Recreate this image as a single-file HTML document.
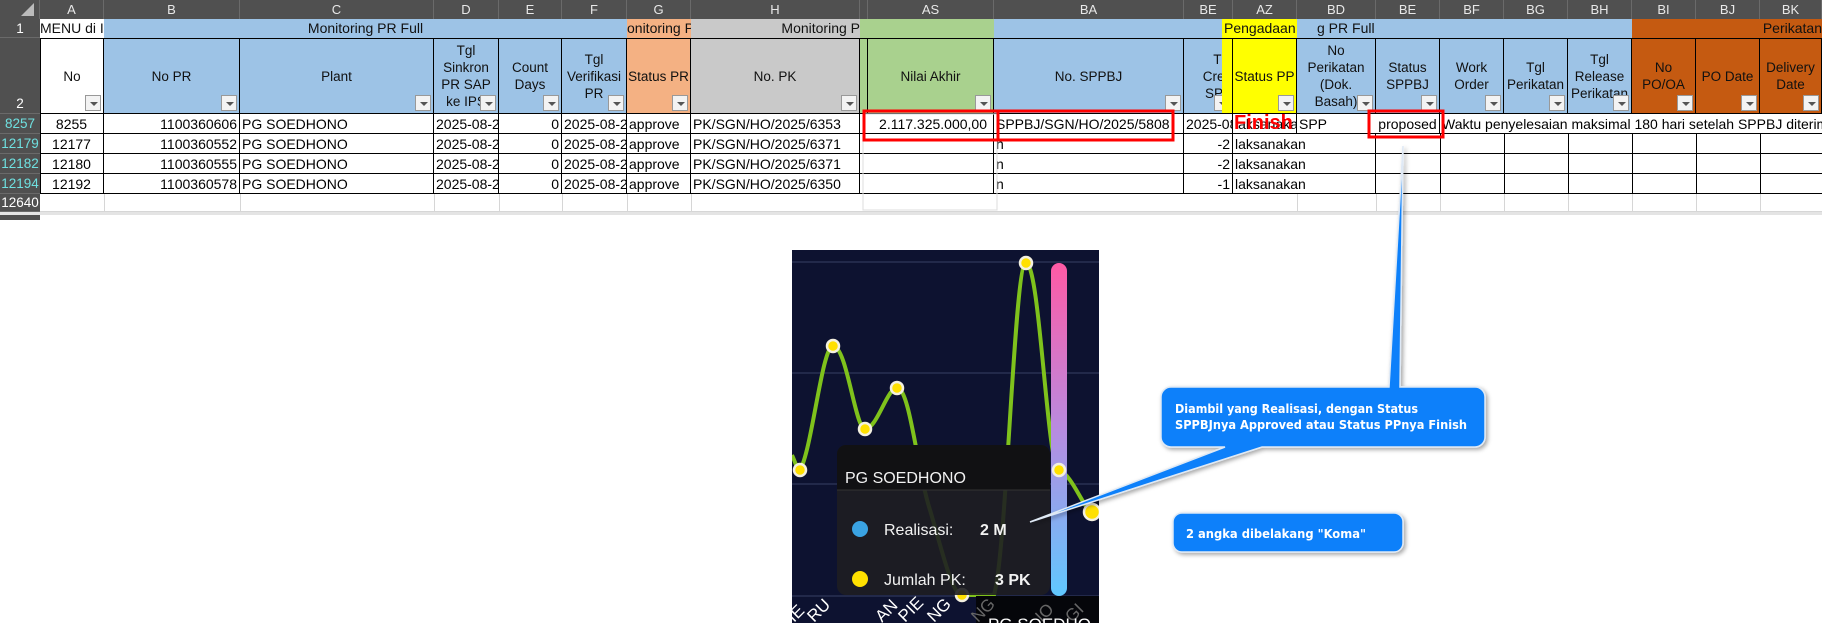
<!DOCTYPE html>
<html><head><meta charset="utf-8">
<style>
*{margin:0;padding:0;box-sizing:border-box}
body{width:1822px;height:623px;background:#fff;position:relative;overflow:hidden;font-family:"Liberation Sans",Arial,sans-serif;}
.a{position:absolute;white-space:nowrap;overflow:hidden}
.ch{top:0;height:19px;background:#505050;color:#e8e8e8;font-size:13px;text-align:center;line-height:19px;border-right:1px solid #6a6a6a}
.rh{left:0;width:40px;background:#505050;color:#fff;font-size:13.5px;text-align:center;border-bottom:1px solid #6a6a6a}
.h1{top:19px;height:19px;font-size:14px;line-height:19px;color:#111;text-align:center}
.h2{top:38px;height:76px;font-size:13.5px;color:#111;text-align:center;border:1px solid #000;border-width:1px 1px 1px 0;display:flex;align-items:center;justify-content:center;line-height:17px;white-space:normal}
.f{position:absolute;right:2px;bottom:2px;width:16px;height:16px;background:#f3f3f3;border:1px solid #999}
.f:after{content:"";position:absolute;left:4px;top:6px;border-left:4px solid transparent;border-right:4px solid transparent;border-top:4px solid #555}
.c{height:20px;font-size:14px;line-height:20px;color:#000;border-right:1px solid #000;border-bottom:1px solid #000;padding:0 2px}
.r{text-align:right}.m{text-align:center}
</style></head><body>
<div class="a ch" style="left:0;width:40px;background:#505050"><svg width="40" height="19"><polygon points="34,3 34,16 21,16" fill="#bbb"/></svg></div>
<div class="a ch" style="left:40px;width:64px">A</div>
<div class="a ch" style="left:104px;width:136px">B</div>
<div class="a ch" style="left:240px;width:194px">C</div>
<div class="a ch" style="left:434px;width:65px">D</div>
<div class="a ch" style="left:499px;width:63px">E</div>
<div class="a ch" style="left:562px;width:65px">F</div>
<div class="a ch" style="left:627px;width:64px">G</div>
<div class="a ch" style="left:691px;width:169px">H</div>
<div class="a ch" style="left:860px;width:8px"></div>
<div class="a ch" style="left:868px;width:126px">AS</div>
<div class="a ch" style="left:994px;width:190px">BA</div>
<div class="a ch" style="left:1184px;width:49px">BE</div>
<div class="a ch" style="left:1233px;width:64px">AZ</div>
<div class="a ch" style="left:1297px;width:79px">BD</div>
<div class="a ch" style="left:1376px;width:64px">BE</div>
<div class="a ch" style="left:1440px;width:64px">BF</div>
<div class="a ch" style="left:1504px;width:64px">BG</div>
<div class="a ch" style="left:1568px;width:64px">BH</div>
<div class="a ch" style="left:1632px;width:64px">BI</div>
<div class="a ch" style="left:1696px;width:64px">BJ</div>
<div class="a ch" style="left:1760px;width:62px">BK</div>
<div class="a rh" style="top:19px;height:19px;line-height:19px">1</div>
<div class="a rh" style="top:38px;height:76px;line-height:20px;padding-top:56px">2</div>
<div class="a rh" style="top:114px;height:20px;line-height:20px;color:#6fe0e0">8257</div>
<div class="a rh" style="top:134px;height:20px;line-height:20px;color:#6fe0e0">12179</div>
<div class="a rh" style="top:154px;height:20px;line-height:20px;color:#6fe0e0">12182</div>
<div class="a rh" style="top:174px;height:20px;line-height:20px;color:#6fe0e0">12194</div>
<div class="a rh" style="top:194px;height:18px;line-height:18px">12640</div>
<div class="a rh" style="top:212px;height:8px;background:#505050;border:none"></div>
<div class="a h1" style="left:40px;width:64px;background:#fff;text-align:right">MENU di IPS</div>
<div class="a h1" style="left:104px;width:523px;background:#9dc3e6">Monitoring PR Full</div>
<div class="a h1" style="left:627px;width:64px;background:#f4b183;text-align:left">onitoring P</div>
<div class="a h1" style="left:691px;width:169px;background:#c9c9c9;text-align:right">Monitoring P</div>
<div class="a h1" style="left:860px;width:134px;background:#a9d18e"></div>
<div class="a h1" style="left:994px;width:233px;background:#9dc3e6"></div>
<div class="a h1" style="left:1222px;width:75px;background:#ffff00;text-align:left;padding-left:2px">Pengadaan</div>
<div class="a h1" style="left:1297px;width:335px;background:#9dc3e6;text-align:left;padding-left:20px">g PR Full</div>
<div class="a h1" style="left:1632px;width:190px;background:#c55a11;text-align:right">Perikatan</div>
<div class="a h2" style="left:40px;width:64px;background:#fff;border-left:1px solid #000">No<span class="f"></span></div>
<div class="a h2" style="left:104px;width:136px;background:#9dc3e6">No PR<span class="f"></span></div>
<div class="a h2" style="left:240px;width:194px;background:#9dc3e6">Plant<span class="f"></span></div>
<div class="a h2" style="left:434px;width:65px;background:#9dc3e6">Tgl Sinkron PR SAP ke IPS<span class="f"></span></div>
<div class="a h2" style="left:499px;width:63px;background:#9dc3e6">Count Days<span class="f"></span></div>
<div class="a h2" style="left:562px;width:65px;background:#9dc3e6">Tgl Verifikasi PR<span class="f"></span></div>
<div class="a h2" style="left:627px;width:64px;background:#f4b183">Status PR<span class="f"></span></div>
<div class="a h2" style="left:691px;width:169px;background:#c9c9c9">No. PK<span class="f"></span></div>
<div class="a h2" style="left:860px;width:8px;background:#a9d18e;border-right:1px solid #000"></div>
<div class="a h2" style="left:868px;width:126px;background:#a9d18e">Nilai Akhir<span class="f"></span></div>
<div class="a h2" style="left:994px;width:190px;background:#9dc3e6">No. SPPBJ<span class="f"></span></div>
<div class="a h2" style="left:1184px;width:49px;background:#9dc3e6;justify-content:flex-end;text-align:right">Tgl Crea SPP<span class="f"></span></div>
<div class="a h2" style="left:1222px;width:11px;background:#ffff00"></div>
<div class="a h2" style="left:1233px;width:64px;background:#ffff00">Status PP<span class="f"></span></div>
<div class="a h2" style="left:1297px;width:79px;background:#9dc3e6">No Perikatan (Dok. Basah)<span class="f"></span></div>
<div class="a h2" style="left:1376px;width:64px;background:#9dc3e6">Status SPPBJ<span class="f"></span></div>
<div class="a h2" style="left:1440px;width:64px;background:#9dc3e6">Work Order<span class="f"></span></div>
<div class="a h2" style="left:1504px;width:64px;background:#9dc3e6">Tgl Perikatan<span class="f"></span></div>
<div class="a h2" style="left:1568px;width:64px;background:#9dc3e6">Tgl Release Perikatan<span class="f"></span></div>
<div class="a h2" style="left:1632px;width:64px;background:#c55a11">No PO/OA<span class="f"></span></div>
<div class="a h2" style="left:1696px;width:64px;background:#c55a11">PO Date<span class="f"></span></div>
<div class="a h2" style="left:1760px;width:62px;background:#c55a11">Delivery Date<span class="f"></span></div>

<div class="a" style="left:40px;top:114px;width:1782px;height:80px;border-left:1px solid #000"></div>
<div class="a c m" style="left:40px;top:114px;width:64px">8255</div>
<div class="a c r" style="left:104px;top:114px;width:136px">1100360606</div>
<div class="a c" style="left:240px;top:114px;width:194px">PG SOEDHONO</div>
<div class="a c" style="left:434px;top:114px;width:65px">2025-08-27</div>
<div class="a c r" style="left:499px;top:114px;width:63px">0</div>
<div class="a c" style="left:562px;top:114px;width:65px">2025-08-27</div>
<div class="a c" style="left:627px;top:114px;width:64px">approve</div>
<div class="a c" style="left:691px;top:114px;width:169px">PK/SGN/HO/2025/6353</div>
<div class="a c r" style="left:860px;top:114px;width:134px;padding-right:6px">2.117.325.000,00</div>
<div class="a c" style="left:994px;top:114px;width:190px">SPPBJ/SGN/HO/2025/5808</div>
<div class="a c" style="left:1184px;top:114px;width:49px">2025-08</div>
<div class="a c" style="left:1233px;top:114px;width:64px">laksanakan</div>
<div class="a c" style="left:1297px;top:114px;width:79px;border-right:none">SPP</div>
<div class="a c m" style="left:1376px;top:114px;width:64px">proposed</div>
<div class="a c" style="left:1440px;top:114px;width:382px;border-right:none">Waktu penyelesaian maksimal 180 hari setelah SPPBJ diterima</div>

<div class="a c m" style="left:40px;top:134px;width:64px">12177</div>
<div class="a c r" style="left:104px;top:134px;width:136px">1100360552</div>
<div class="a c" style="left:240px;top:134px;width:194px">PG SOEDHONO</div>
<div class="a c" style="left:434px;top:134px;width:65px">2025-08-27</div>
<div class="a c r" style="left:499px;top:134px;width:63px">0</div>
<div class="a c" style="left:562px;top:134px;width:65px">2025-08-27</div>
<div class="a c" style="left:627px;top:134px;width:64px">approve</div>
<div class="a c" style="left:691px;top:134px;width:169px">PK/SGN/HO/2025/6371</div>
<div class="a c" style="left:860px;top:134px;width:134px"></div>
<div class="a c" style="left:994px;top:134px;width:190px">n</div>
<div class="a c r" style="left:1184px;top:134px;width:49px">-2</div>
<div class="a c" style="left:1233px;top:134px;width:143px">laksanakan</div>

<div class="a c m" style="left:40px;top:154px;width:64px">12180</div>
<div class="a c r" style="left:104px;top:154px;width:136px">1100360555</div>
<div class="a c" style="left:240px;top:154px;width:194px">PG SOEDHONO</div>
<div class="a c" style="left:434px;top:154px;width:65px">2025-08-27</div>
<div class="a c r" style="left:499px;top:154px;width:63px">0</div>
<div class="a c" style="left:562px;top:154px;width:65px">2025-08-27</div>
<div class="a c" style="left:627px;top:154px;width:64px">approve</div>
<div class="a c" style="left:691px;top:154px;width:169px">PK/SGN/HO/2025/6371</div>
<div class="a c" style="left:860px;top:154px;width:134px"></div>
<div class="a c" style="left:994px;top:154px;width:190px">n</div>
<div class="a c r" style="left:1184px;top:154px;width:49px">-2</div>
<div class="a c" style="left:1233px;top:154px;width:143px">laksanakan</div>

<div class="a c m" style="left:40px;top:174px;width:64px">12192</div>
<div class="a c r" style="left:104px;top:174px;width:136px">1100360578</div>
<div class="a c" style="left:240px;top:174px;width:194px">PG SOEDHONO</div>
<div class="a c" style="left:434px;top:174px;width:65px">2025-08-27</div>
<div class="a c r" style="left:499px;top:174px;width:63px">0</div>
<div class="a c" style="left:562px;top:174px;width:65px">2025-08-27</div>
<div class="a c" style="left:627px;top:174px;width:64px">approve</div>
<div class="a c" style="left:691px;top:174px;width:169px">PK/SGN/HO/2025/6350</div>
<div class="a c" style="left:860px;top:174px;width:134px"></div>
<div class="a c" style="left:994px;top:174px;width:190px">n</div>
<div class="a c r" style="left:1184px;top:174px;width:49px">-1</div>
<div class="a c" style="left:1233px;top:174px;width:143px">laksanakan</div>
<svg class="a" style="left:0;top:0" width="1822" height="623">
 <g stroke="#000" stroke-width="1">
  <line x1="1440.5" y1="134" x2="1440.5" y2="194"/><line x1="1504.5" y1="134" x2="1504.5" y2="194"/>
  <line x1="1568.5" y1="134" x2="1568.5" y2="194"/><line x1="1632.5" y1="134" x2="1632.5" y2="194"/>
  <line x1="1696.5" y1="134" x2="1696.5" y2="194"/><line x1="1760.5" y1="134" x2="1760.5" y2="194"/>
  <line x1="1376" y1="153.5" x2="1822" y2="153.5"/><line x1="1376" y1="173.5" x2="1822" y2="173.5"/><line x1="1376" y1="193.5" x2="1822" y2="193.5"/>
  <line x1="1376" y1="133.5" x2="1822" y2="133.5"/>
 </g>
 <g stroke="#d6d6d6"><line x1="40" y1="211.5" x2="1822" y2="211.5"/>
  <line x1="104.5" y1="194" x2="104.5" y2="212"/><line x1="240.5" y1="194" x2="240.5" y2="212"/><line x1="434.5" y1="194" x2="434.5" y2="212"/><line x1="499.5" y1="194" x2="499.5" y2="212"/><line x1="562.5" y1="194" x2="562.5" y2="212"/><line x1="627.5" y1="194" x2="627.5" y2="212"/><line x1="691.5" y1="194" x2="691.5" y2="212"/><line x1="1297.5" y1="194" x2="1297.5" y2="212"/><line x1="1376.5" y1="194" x2="1376.5" y2="212"/><line x1="1440.5" y1="194" x2="1440.5" y2="212"/><line x1="1504.5" y1="194" x2="1504.5" y2="212"/><line x1="1568.5" y1="194" x2="1568.5" y2="212"/><line x1="1632.5" y1="194" x2="1632.5" y2="212"/><line x1="1696.5" y1="194" x2="1696.5" y2="212"/><line x1="1760.5" y1="194" x2="1760.5" y2="212"/></g>
 <rect x="0" y="212" width="1822" height="3" fill="#e4e4e4"/>
 <rect x="863" y="114" width="134" height="96" fill="none" stroke="#ddd" stroke-width="1"/>
 <g fill="none" stroke="#ff0000" stroke-width="3">
  <rect x="864" y="111" width="134" height="29"/>
  <rect x="998" y="111" width="175" height="29"/>
  <rect x="1369" y="111" width="74" height="26"/>
 </g>
 <text x="1234" y="129" fill="#ff0000" font-family="Liberation Sans" font-weight="bold" font-size="20">Finish</text>
</svg>

<svg class="a" style="left:792px;top:250px" width="307" height="373">
 <defs>
  <linearGradient id="bar" x1="0" y1="0" x2="0" y2="1"><stop offset="0" stop-color="#ff5aa5"/><stop offset="0.5" stop-color="#b88be0"/><stop offset="1" stop-color="#60c8ff"/></linearGradient>
 </defs>
 <rect width="307" height="373" fill="#0d1230"/>
 <g stroke="#2a3152" stroke-width="1.5"><line x1="0" y1="12" x2="307" y2="12"/><line x1="0" y1="123" x2="307" y2="123"/><line x1="0" y1="234" x2="307" y2="234"/><line x1="0" y1="346" x2="307" y2="346"/></g>
 <path d="M0,205 C4,214 6,222 8,220 C20,200 30,96 41,96 C55,96 63,179 73,179 C85,179 95,138 105,138 C118,138 125,220 138,260 C150,300 160,345 170,345 L202,345 C215,300 222,13 234,13 C248,13 255,220 267,220 C280,225 290,255 299,262" fill="none" stroke="#7fc21c" stroke-width="4"/>
 <rect x="259" y="13" width="16" height="333" rx="8" fill="url(#bar)"/>
 <g fill="#ffe000" stroke="#f3f0e0" stroke-width="2.5">
  <circle cx="8" cy="220" r="6"/><circle cx="41" cy="96" r="6"/><circle cx="73" cy="179" r="6"/><circle cx="105" cy="138" r="6"/>
  <circle cx="170" cy="345" r="6"/><circle cx="234" cy="13" r="6"/><circle cx="267" cy="220" r="6"/><circle cx="300" cy="262" r="8"/>
 </g>
 <rect x="45" y="195" width="213" height="150" rx="9" fill="rgba(30,30,34,0.9)"/>
 <path d="M54,195 H249 A9,9 0 0 1 258,204 V240 H45 V204 A9,9 0 0 1 54,195Z" fill="#111113"/>
 <line x1="45" y1="240" x2="258" y2="240" stroke="#333"/>
 <text x="53" y="233" fill="#f2f2f2" font-family="Liberation Sans" font-size="16">PG SOEDHONO</text>
 <circle cx="68" cy="279" r="8" fill="#3aa3e3"/>
 <text x="92" y="285" fill="#f2f2f2" font-family="Liberation Sans" font-size="16">Realisasi:</text>
 <text x="188" y="285" fill="#f2f2f2" font-family="Liberation Sans" font-size="16" font-weight="bold">2 M</text>
 <circle cx="68" cy="329" r="8" fill="#ffe000"/>
 <text x="92" y="335" fill="#f2f2f2" font-family="Liberation Sans" font-size="16">Jumlah PK:</text>
 <text x="203" y="335" fill="#f2f2f2" font-family="Liberation Sans" font-size="16" font-weight="bold">3 PK</text>
 <rect x="184" y="346" width="123" height="27" fill="#05060a"/>
 <g fill="#fff" font-family="Liberation Sans" font-size="17">
  <text transform="translate(2,373) rotate(-45)">IE</text>
  <text transform="translate(22,373) rotate(-45)">RU</text>
  <text transform="translate(90,373) rotate(-45)">AN</text>
  <text transform="translate(113,373) rotate(-45)">PIE</text>
  <text transform="translate(142,373) rotate(-45)">NG</text>
  <text transform="translate(186,373) rotate(-45)" fill="#666">NG</text>
  <text transform="translate(250,373) rotate(-45)" fill="#666">IO</text>
  <text transform="translate(280,373) rotate(-45)" fill="#666">GI</text>
  <text x="196" y="380" font-size="17">PG SOEDHO</text>
 </g>
</svg>

<svg class="a" style="left:0;top:0" width="1822" height="623">
 <defs><filter id="sh"><feDropShadow dx="2" dy="2" stdDeviation="2" flood-color="#000" flood-opacity="0.35"/></filter></defs>
 <g filter="url(#sh)" fill="#0a80fa" stroke="#dfe9f5" stroke-width="1.5">
  <path d="M1171,387 H1389 L1403,146 L1400,387 H1475 A10,10 0 0 1 1485,397 V437 A10,10 0 0 1 1475,447 H1262 L1030,522 L1225,447 H1171 A10,10 0 0 1 1161,437 V397 A10,10 0 0 1 1171,387Z"/>
  <rect x="1173" y="513" width="230" height="39" rx="9"/>
 </g>
 <g fill="#fff" font-family="DejaVu Sans" font-weight="bold" font-size="12">
  <text x="1175" y="413" textLength="243" lengthAdjust="spacingAndGlyphs">Diambil yang Realisasi, dengan Status</text>
  <text x="1175" y="429" textLength="292" lengthAdjust="spacingAndGlyphs">SPPBJnya Approved atau Status PPnya Finish</text>
  <text x="1186" y="538" textLength="180" lengthAdjust="spacingAndGlyphs">2 angka dibelakang "Koma"</text>
 </g>
</svg>
</body></html>
